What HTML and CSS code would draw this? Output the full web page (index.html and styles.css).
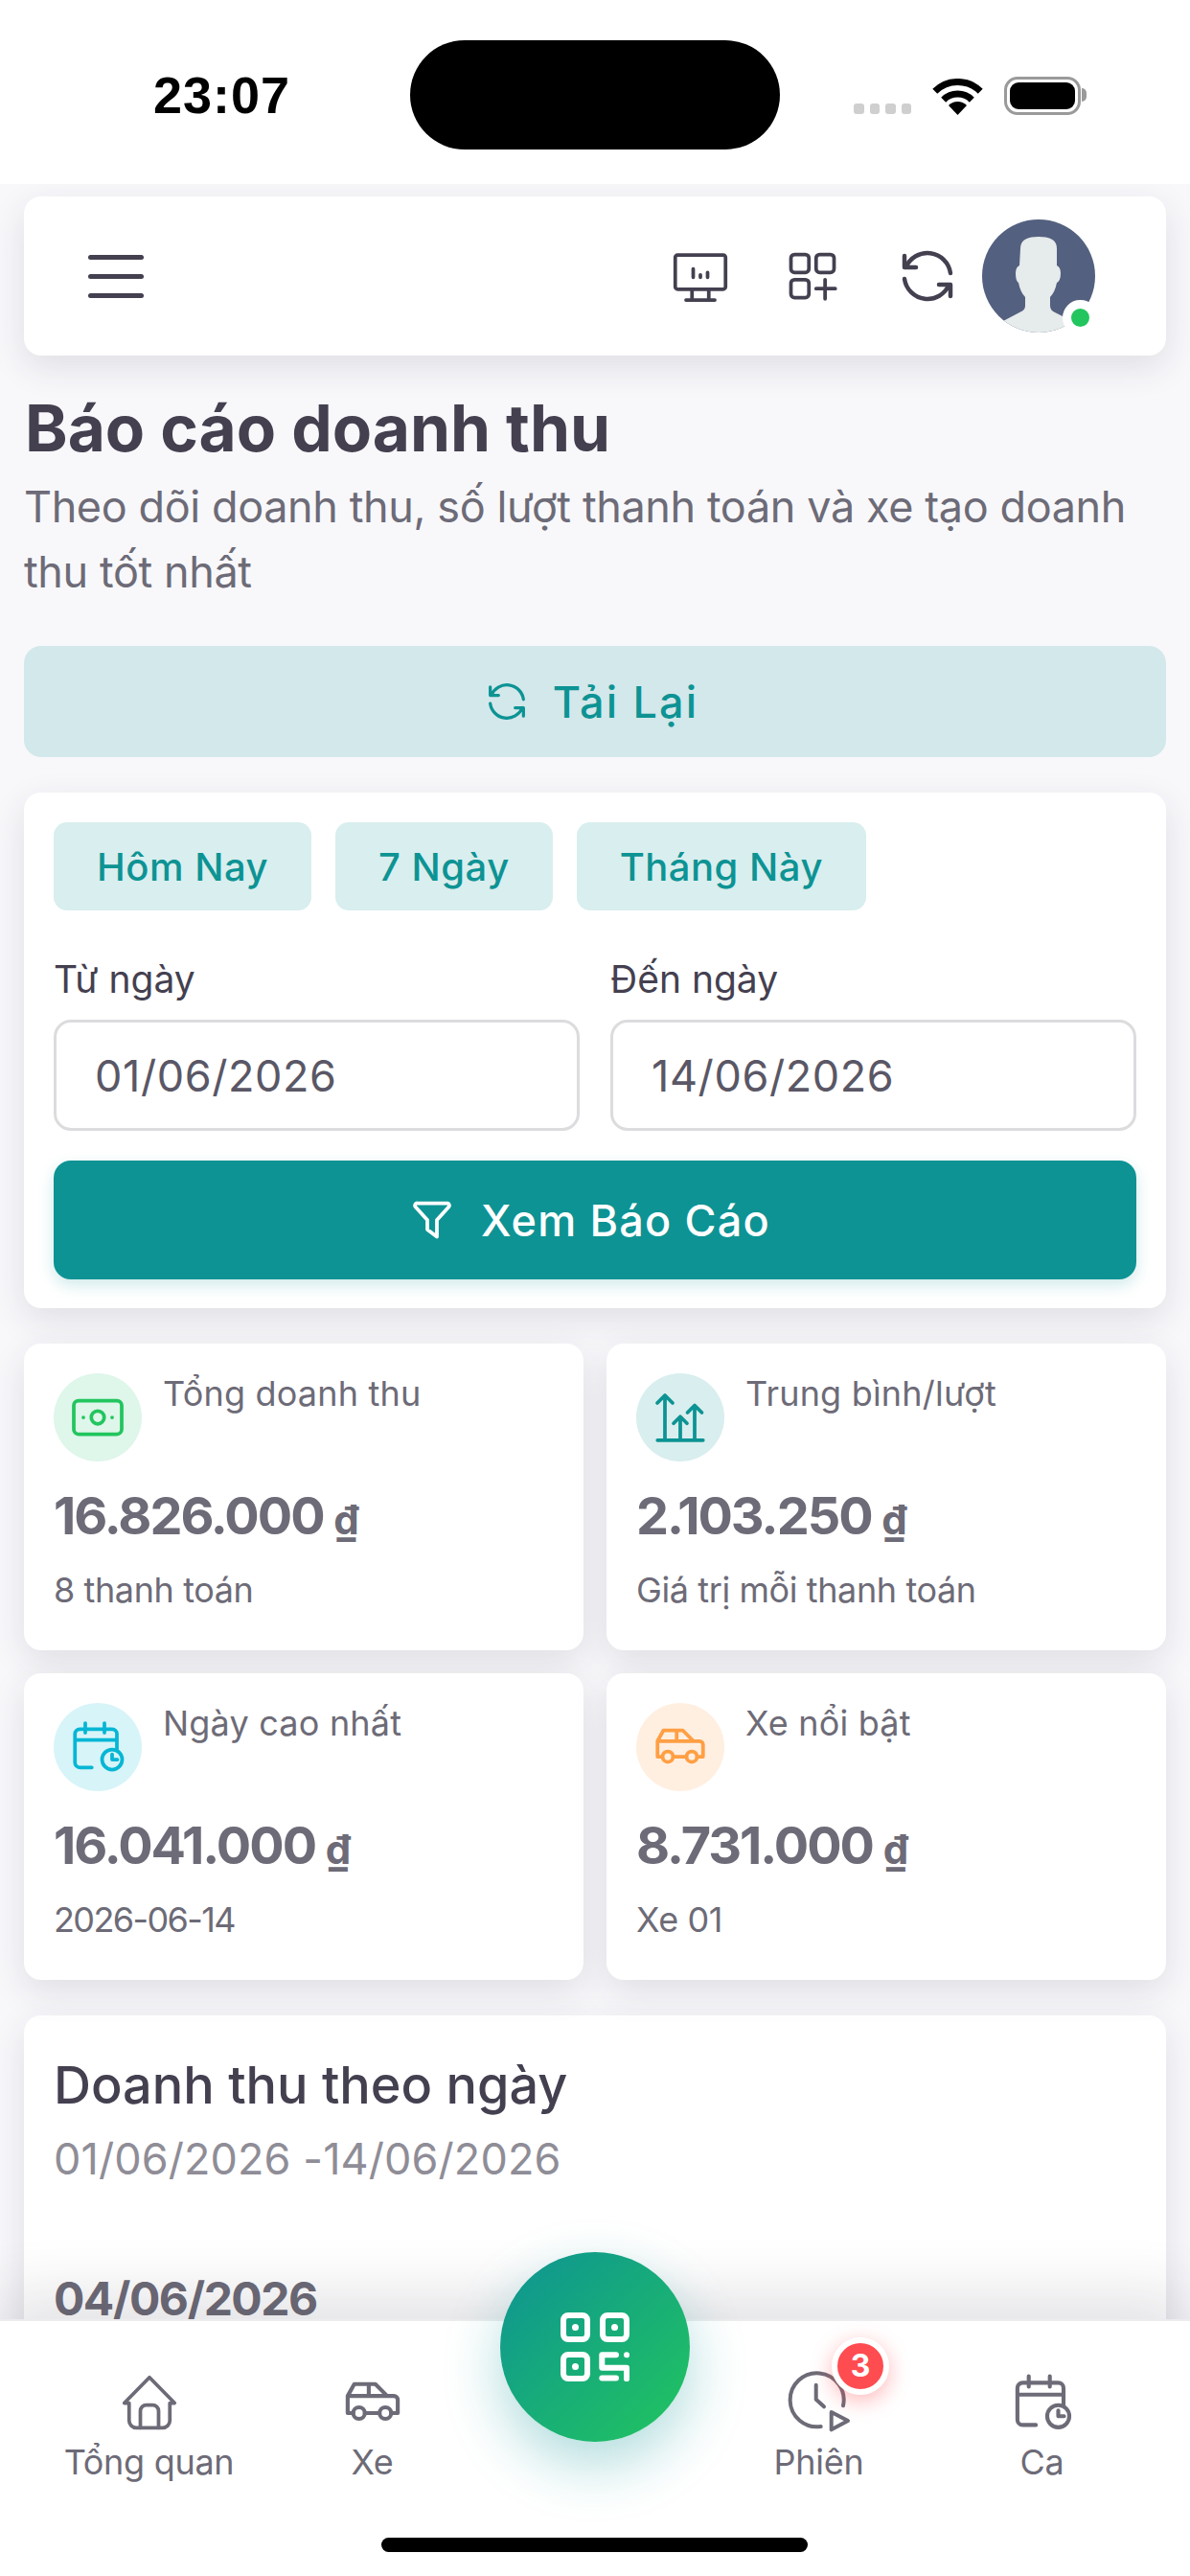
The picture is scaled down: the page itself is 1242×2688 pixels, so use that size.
FILE: index.html
```html
<!DOCTYPE html>
<html lang="vi">
<head>
    <meta charset="UTF-8">
    <meta name="viewport" content="width=device-width, initial-scale=1.0">
    <title>Báo cáo doanh thu</title>
    <link rel="stylesheet" href="styles.css">
</head>
<body>

    <div class="page">

        <!-- Status bar -->
        <div class="status-bar">
            <span class="clock">23:07</span>
            <div class="island"></div>
            <div class="status-icons">
                <div class="signal"><i></i><i></i><i></i><i></i></div>
                <svg class="wifi" width="53" height="38" viewBox="0 0 53 38">
                    <path d="M2.8 13.3A33.5 33.5 0 0 1 50.2 13.3M11.7 22.2A21 21 0 0 1 41.3 22.2" fill="none" stroke="#000" stroke-width="7"/>
                    <path d="M26.5 38L17 28A13.5 13.5 0 0 1 36 28Z" fill="#000"/>
                </svg>
                <div class="battery"><div class="battery-level"></div></div>
            </div>
        </div>

        <div class="content">

            <!-- Top navbar -->
            <div class="navbar">
                <div class="hamburger"><i></i><i></i><i></i></div>
                <div class="navbar-right">
                    <svg class="icon icon-dark nav-monitor" viewBox="0 0 24 24">
                        <rect x="1.5" y="3.2" width="21" height="14.3" rx="1"/>
                        <path d="M9 9v3.5M12 11.5v1M15 10.5v2M8.5 17.5v4M15.5 17.5v4M6 22h12"/>
                    </svg>
                    <svg class="icon icon-dark nav-apps" viewBox="0 0 24 24">
                        <rect x="3" y="3" width="7.5" height="7.5" rx="1.5"/>
                        <rect x="13.5" y="3" width="7.5" height="7.5" rx="1.5"/>
                        <rect x="3" y="13.5" width="7.5" height="7.5" rx="1.5"/>
                        <path d="M13.5 17.25h8M17.25 13.5v8"/>
                    </svg>
                    <svg class="icon icon-dark nav-refresh" viewBox="0 0 24 24">
                        <path d="M20 11A8.1 8.1 0 0 0 4.5 9M4 5v4h4M4 13a8.1 8.1 0 0 0 15.5 2m.5 4v-4h-4"/>
                    </svg>
                    <div class="avatar-wrap">
                        <div class="avatar">
                            <svg width="118" height="118" viewBox="0 0 118 118">
                                <path d="M40 30Q40 18 59 18Q78 18 78 30V48Q82 50 82 56Q82 64 78 66Q76 76 71 81V90Q71 95 76 97L118 118H0L22 106L41 96Q45 94 45 90V81Q40 76 38 66Q35 64 35 56Q35 50 39 48Z" fill="#e6ebeb"/>
                            </svg>
                        </div>
                        <span class="online-dot"></span>
                    </div>
                </div>
            </div>

            <h1>Báo cáo doanh thu</h1>
            <p class="subtitle">Theo dõi doanh thu, số lượt thanh toán và xe tạo doanh thu tốt nhất</p>

            <button class="btn-reload" type="button">
                <svg class="icon icon-teal" viewBox="0 0 24 24">
                    <path d="M20 11A8.1 8.1 0 0 0 4.5 9M4 5v4h4M4 13a8.1 8.1 0 0 0 15.5 2m.5 4v-4h-4"/>
                </svg>
                Tải Lại
            </button>

            <!-- Date filter -->
            <form class="card filter-card">
                <div class="chips">
                    <button class="chip" type="button">Hôm Nay</button>
                    <button class="chip" type="button">7 Ngày</button>
                    <button class="chip" type="button">Tháng Này</button>
                </div>
                <div class="date-fields">
                    <div class="date-field">
                        <label for="from_date">Từ ngày</label>
                        <input type="text" id="from_date" value="01/06/2026">
                    </div>
                    <div class="date-field">
                        <label for="to_date">Đến ngày</label>
                        <input type="text" id="to_date" value="14/06/2026">
                    </div>
                </div>
                <button class="btn-primary" type="button">
                    <svg class="icon icon-white" viewBox="0 0 24 24">
                        <path d="M5.5 5h13a1 1 0 0 1 .5 1.5L14 12v7l-4-3v-4L5 6.5A1 1 0 0 1 5.5 5"/>
                    </svg>
                    Xem Báo Cáo
                </button>
            </form>

            <!-- Summary cards -->
            <div class="stats">
                <div class="card stat-card">
                    <div class="stat-head">
                        <span class="stat-icon bg-green">
                            <svg class="icon icon-green" viewBox="0 0 24 24">
                                <rect x="2" y="5" width="20" height="14" rx="2"/>
                                <circle cx="12" cy="12" r="2.7"/>
                                <path d="M6 12h.01M18 12h.01"/>
                            </svg>
                        </span>
                        <span class="stat-label">Tổng doanh thu</span>
                    </div>
                    <div class="stat-value">16.826.000 <small>₫</small></div>
                    <div class="stat-note">8 thanh toán</div>
                </div>
                <div class="card stat-card">
                    <div class="stat-head">
                        <span class="stat-icon bg-teal">
                            <svg class="icon icon-teal" viewBox="0 0 24 24">
                                <path d="M2.5 21.5h19M5.6 21.5V2.8M2.4 6l3.2-3.2L8.8 6M12 21.5v-9.5M9.2 14.5l2.8-2.8 2.8 2.8M18 21.5V7M15 10l3-3 3 3"/>
                            </svg>
                        </span>
                        <span class="stat-label">Trung bình/lượt</span>
                    </div>
                    <div class="stat-value">2.103.250 <small>₫</small></div>
                    <div class="stat-note">Giá trị mỗi thanh toán</div>
                </div>
                <div class="card stat-card">
                    <div class="stat-head">
                        <span class="stat-icon bg-cyan">
                            <svg class="icon icon-cyan" viewBox="0 0 24 24">
                                <path d="M9.5 20.5H4.5a2 2 0 0 1-2-2V6.5a2 2 0 0 1 2-2h13.5a2 2 0 0 1 2 2V13M6.8 2v4M14.8 2v4M2.5 9h17.5"/>
                                <circle cx="18" cy="17.2" r="4.2"/>
                                <path d="M18 15v2.2h2.2"/>
                            </svg>
                        </span>
                        <span class="stat-label">Ngày cao nhất</span>
                    </div>
                    <div class="stat-value">16.041.000 <small>₫</small></div>
                    <div class="stat-note stat-note-date">2026-06-14</div>
                </div>
                <div class="card stat-card">
                    <div class="stat-head">
                        <span class="stat-icon bg-orange">
                            <svg class="icon icon-orange" viewBox="0 0 24 24">
                                <circle cx="6.8" cy="16" r="2.2"/>
                                <circle cx="16.8" cy="16" r="2.2"/>
                                <path d="M4.6 16H2.5V9.5L5 5H13L17.5 9.5H20a1.5 1.5 0 0 1 1.5 1.5V16H19M14.6 16H9M2.5 9.5H17.5M10.5 5V9.5"/>
                            </svg>
                        </span>
                        <span class="stat-label">Xe nổi bật</span>
                    </div>
                    <div class="stat-value">8.731.000 <small>₫</small></div>
                    <div class="stat-note">Xe 01</div>
                </div>
            </div>

            <!-- Daily revenue -->
            <div class="card daily-card">
                <h3>Doanh thu theo ngày</h3>
                <p class="daily-range">01/06/2026 -14/06/2026</p>
                <div class="daily-date">04/06/2026</div>
            </div>
        </div>

        <!-- Bottom tabs -->
        <nav class="tabbar">
            <a class="tab">
                <svg class="icon icon-gray tab-home" viewBox="0 0 24 24">
                    <path d="M1.5 12.2L12 1.5L22.5 12.2H20.5V19.5a3 3 0 0 1-3 3h-11a3 3 0 0 1-3-3V12.2Z"/>
                    <path d="M8.2 22.5V15.5a2.5 2.5 0 0 1 2.5-2.5h2.6a2.5 2.5 0 0 1 2.5 2.5v7"/>
                </svg>
                <span>Tổng quan</span>
            </a>
            <a class="tab">
                <svg class="icon icon-gray tab-car" viewBox="0 0 24 24">
                    <circle cx="6.8" cy="16" r="2.2"/>
                    <circle cx="16.8" cy="16" r="2.2"/>
                    <path d="M4.6 16H2.5V9.5L5 5H13L17.5 9.5H20a1.5 1.5 0 0 1 1.5 1.5V16H19M14.6 16H9M2.5 9.5H17.5M10.5 5V9.5"/>
                </svg>
                <span>Xe</span>
            </a>
            <div class="tab-spacer"></div>
            <a class="tab">
                <svg class="tab-session" width="66" height="66" viewBox="0 0 66 66" fill="none" stroke="#6d6b77" stroke-width="4" stroke-linecap="round" stroke-linejoin="round">
                    <path d="M58 36.3A28 28 0 1 0 34.7 58"/>
                    <path d="M29.7 14.7V29.7L38 37.3"/>
                    <path d="M45.7 43L63 52L45.7 61.3Z"/>
                </svg>
                <span>Phiên</span>
                <b class="badge">3</b>
            </a>
            <a class="tab">
                <svg class="icon icon-gray tab-shift" viewBox="0 0 24 24">
                    <path d="M9.5 20.5H4.5a2 2 0 0 1-2-2V6.5a2 2 0 0 1 2-2h13.5a2 2 0 0 1 2 2V13M6.8 2v4M14.8 2v4M2.5 9h17.5"/>
                    <circle cx="18" cy="17.2" r="4.2"/>
                    <path d="M18 15v2.2h2.2"/>
                </svg>
                <span>Ca</span>
            </a>

            <button class="fab" type="button">
                <svg width="72" height="72" viewBox="0 0 72 72" fill="none" stroke="#fff" stroke-width="6" stroke-linecap="round" stroke-linejoin="round">
                    <rect x="3" y="3" width="25" height="25" rx="5"/>
                    <rect x="44" y="3" width="25" height="25" rx="5"/>
                    <rect x="3" y="44" width="25" height="25" rx="5"/>
                    <path d="M15.5 15.5h.01M56.5 15.5h.01M15.5 56.5h.01" stroke-width="7"/>
                    <path d="M58 44.3H43.3V57.7H69V69.3M43.3 68.6H58M69 44.3h.01"/>
                </svg>
            </button>

            <div class="home-indicator"></div>
        </nav>
    </div>

</body>
</html>
```

FILE: styles.css
```css
* {
    box-sizing: border-box;
}

body {
    margin: 0;
    font-family: "Inter", "Liberation Sans", sans-serif;
    color: #444050;
    background-color: #f8f8fb;
}

.page {
    position: relative;
    display: flex;
    flex-direction: column;
    width: 1242px;
    height: 2688px;
    overflow: hidden;
}

/* Status bar */
.status-bar {
    position: relative;
    z-index: 2;
    display: flex;
    align-items: flex-start;
    flex: 0 0 192px;
    padding: 42px 0 0 160px;
    background-color: #ffffff;
}

.clock {
    width: 268px;
    margin-top: 27px;
    font-family: "Liberation Sans", sans-serif;
    font-size: 54px;
    line-height: 60px;
    font-weight: 700;
    letter-spacing: 1px;
    color: #000;
}

.island {
    width: 386px;
    height: 114px;
    border-radius: 57px;
    background-color: #000;
}

.status-icons {
    display: flex;
    align-items: flex-end;
    margin: 38px 0 0 77px;
}

.signal {
    display: flex;
    gap: 6px;
    margin: 0 22px 1px 0;
}

.signal i {
    width: 10.5px;
    height: 11px;
    border-radius: 3px;
    background-color: #cfcfcf;
}

.wifi {
    margin-right: 22px;
}

.battery {
    position: relative;
    width: 80px;
    height: 40px;
    padding: 3px;
    border: 3px solid #9a9a9a;
    border-radius: 14px;
}

.battery::after {
    content: "";
    position: absolute;
    top: 9px;
    right: -9px;
    width: 5px;
    height: 14px;
    border-radius: 0 5px 5px 0;
    background-color: #9a9a9a;
}

.battery-level {
    height: 100%;
    border-radius: 9px;
    background-color: #000;
}

/* Shared */
.icon {
    fill: none;
    stroke-width: 1.5;
    stroke-linecap: round;
    stroke-linejoin: round;
    flex: none;
}

.icon-dark { stroke: #444050; }
.icon-teal { stroke: #0d9394; }
.icon-white { stroke: #ffffff; }
.icon-green { stroke: #22c55e; }
.icon-cyan { stroke: #06b6d4; }
.icon-orange { stroke: #ff9f43; }
.icon-gray { stroke: #6d6b77; }

.card {
    background-color: #ffffff;
    border-radius: 18px;
    box-shadow: 0 12px 36px rgba(47, 43, 61, 0.12);
}

/* Content */
.content {
    flex: 1;
    min-height: 0;
    padding: 13px 25px 0;
    overflow: hidden;
}

.navbar {
    display: flex;
    align-items: center;
    justify-content: space-between;
    height: 166px;
    padding: 0 74px 0 67px;
    background-color: #ffffff;
    border-radius: 18px;
    box-shadow: 0 12px 36px rgba(47, 43, 61, 0.12);
}

.hamburger {
    display: flex;
    flex-direction: column;
    gap: 15px;
    width: 58px;
}

.hamburger i {
    height: 5px;
    border-radius: 3px;
    background-color: #444050;
}

.navbar-right {
    display: flex;
    align-items: center;
}

.nav-monitor { width: 60px; height: 60px; margin-right: 57px; }
.nav-apps { width: 60px; height: 60px; margin-right: 54px; }
.nav-refresh { width: 72px; height: 72px; margin-right: 21px; }

.avatar-wrap {
    position: relative;
    width: 118px;
    height: 118px;
}

.avatar {
    width: 118px;
    height: 118px;
    border-radius: 50%;
    overflow: hidden;
    background-color: #54607f;
}

.online-dot {
    position: absolute;
    right: -3px;
    bottom: -3px;
    width: 37px;
    height: 37px;
    border: 9px solid #ffffff;
    border-radius: 50%;
    background-color: #22c55e;
}

h1 {
    margin: 40px 0 0 1px;
    font-size: 67.5px;
    line-height: 72px;
    font-weight: 700;
    color: #444050;
}

.subtitle {
    margin: 12px 0 0 0;
    font-size: 45px;
    line-height: 68px;
    letter-spacing: -0.4px;
    color: #6d6b77;
}

.btn-reload {
    display: flex;
    align-items: center;
    justify-content: center;
    gap: 22px;
    width: 100%;
    height: 116px;
    margin-top: 43px;
    padding: 0 10px 0 0;
    border: none;
    border-radius: 18px;
    background-color: #d3e8ea;
    color: #0d9394;
    font: 500 45px "Inter", sans-serif;
    letter-spacing: 2.2px;
}

.btn-reload .icon {
    width: 52px;
    height: 52px;
}

.filter-card {
    margin-top: 37px;
    padding: 31px;
    height: 538px;
}

.chips {
    display: flex;
    gap: 25px;
}

.chip {
    height: 92px;
    padding: 0 45px;
    border: none;
    border-radius: 14px;
    background-color: #d9eeee;
    color: #0d9394;
    font: 500 40px "Inter", sans-serif;
    letter-spacing: 0.5px;
}

.date-fields {
    display: grid;
    grid-template-columns: 1fr 1fr;
    gap: 32px;
    margin-top: 46px;
}

.date-field label {
    display: block;
    font-size: 39px;
    line-height: 52px;
    color: #444050;
}

.date-field input {
    display: block;
    width: 100%;
    height: 116px;
    margin-top: 16px;
    padding: 0 40px;
    border: 3px solid #dcdbde;
    border-radius: 18px;
    background-color: #fff;
    color: #5a5766;
    font: 400 45px "Inter", sans-serif;
    letter-spacing: 0.6px;
}

.btn-primary {
    display: flex;
    align-items: center;
    justify-content: center;
    gap: 21px;
    width: 100%;
    height: 124px;
    margin-top: 31px;
    padding: 0 17px 0 0;
    border: none;
    border-radius: 18px;
    background-color: #0d9394;
    color: #ffffff;
    font: 500 45px "Inter", sans-serif;
    letter-spacing: 1.2px;
    box-shadow: 0 6px 16px rgba(13, 147, 148, 0.2);
}

.btn-primary .icon {
    width: 60px;
    height: 60px;
}

/* Stat cards */
.stats {
    display: grid;
    grid-template-columns: 1fr 1fr;
    gap: 24px;
    margin-top: 37px;
}

.stat-card {
    height: 320px;
    padding: 31px;
}

.stat-head {
    display: flex;
    align-items: flex-start;
    gap: 22px;
}

.stat-icon {
    display: flex;
    align-items: center;
    justify-content: center;
    width: 92px;
    height: 92px;
    border-radius: 50%;
}

.stat-icon .icon {
    width: 60px;
    height: 60px;
}

.bg-green { background-color: #dff6ea; }
.bg-teal { background-color: #d9eeee; }
.bg-cyan { background-color: #d7f4f8; }
.bg-orange { background-color: #ffefe1; }

.stat-label {
    font-size: 36px;
    line-height: 42px;
    letter-spacing: 0.2px;
    color: #6d6b77;
}

.stat-value {
    margin-top: 25px;
    font-size: 54px;
    line-height: 64px;
    font-weight: 700;
    letter-spacing: -2px;
    color: #6d6b77;
}

.stat-value small {
    font-size: 42px;
    letter-spacing: 0;
}

.stat-note {
    margin-top: 18px;
    font-size: 36px;
    line-height: 46px;
    letter-spacing: -0.4px;
    color: #6d6b77;
}

.stat-note-date {
    letter-spacing: -1.6px;
}

/* Daily revenue */
.daily-card {
    margin-top: 37px;
    height: 340px;
    padding: 41px 31px 0;
}

.daily-card h3 {
    margin: 0;
    font-size: 54px;
    line-height: 64px;
    font-weight: 500;
    color: #444050;
}

.daily-range {
    margin: 15px 0 0;
    font-size: 45px;
    line-height: 60px;
    letter-spacing: 0.1px;
    color: #8f8d97;
}

.daily-date {
    margin-top: 86px;
    font-size: 48px;
    line-height: 60px;
    font-weight: 700;
    letter-spacing: -1.5px;
    color: #6d6b77;
}

/* Bottom tabs */
.tabbar {
    position: relative;
    display: grid;
    grid-template-columns: repeat(5, 233px);
    flex: 0 0 268px;
    padding: 52px 0 0 39px;
    background-color: #ffffff;
    border-top: 2px solid #ececee;
    box-shadow: 0 -24px 60px rgba(47, 43, 61, 0.14);
}

.tab {
    position: relative;
    display: flex;
    flex-direction: column;
    align-items: center;
    height: 130px;
    font-size: 36px;
    line-height: 46px;
    letter-spacing: -0.3px;
    color: #6d6b77;
}

.tab svg {
    position: relative;
    height: 66px;
    margin-bottom: 6px;
}

.tab-home { width: 60px; }
.tab-car { width: 68px; }
.tab-session { width: 66px; }
.tab-shift { width: 72px; }

.badge {
    position: absolute;
    top: -35px;
    left: 130px;
    width: 60px;
    height: 60px;
    border: 6px solid #ffffff;
    border-radius: 50%;
    background-color: #ff4c51;
    box-shadow: 0 6px 22px rgba(255, 76, 81, 0.4);
    color: #ffffff;
    font-size: 32px;
    line-height: 48px;
    font-weight: 700;
    letter-spacing: 0;
    text-align: center;
}

.fab {
    position: absolute;
    top: -72px;
    left: 522px;
    display: flex;
    align-items: center;
    justify-content: center;
    width: 198px;
    height: 198px;
    padding: 0;
    border: none;
    border-radius: 50%;
    background: linear-gradient(135deg, #0d9394, #22c55e);
    box-shadow: 0 24px 60px rgba(13, 147, 148, 0.32);
}

.home-indicator {
    position: absolute;
    left: 398px;
    bottom: 25px;
    width: 445px;
    height: 15px;
    border-radius: 8px;
    background-color: #000;
}
```
